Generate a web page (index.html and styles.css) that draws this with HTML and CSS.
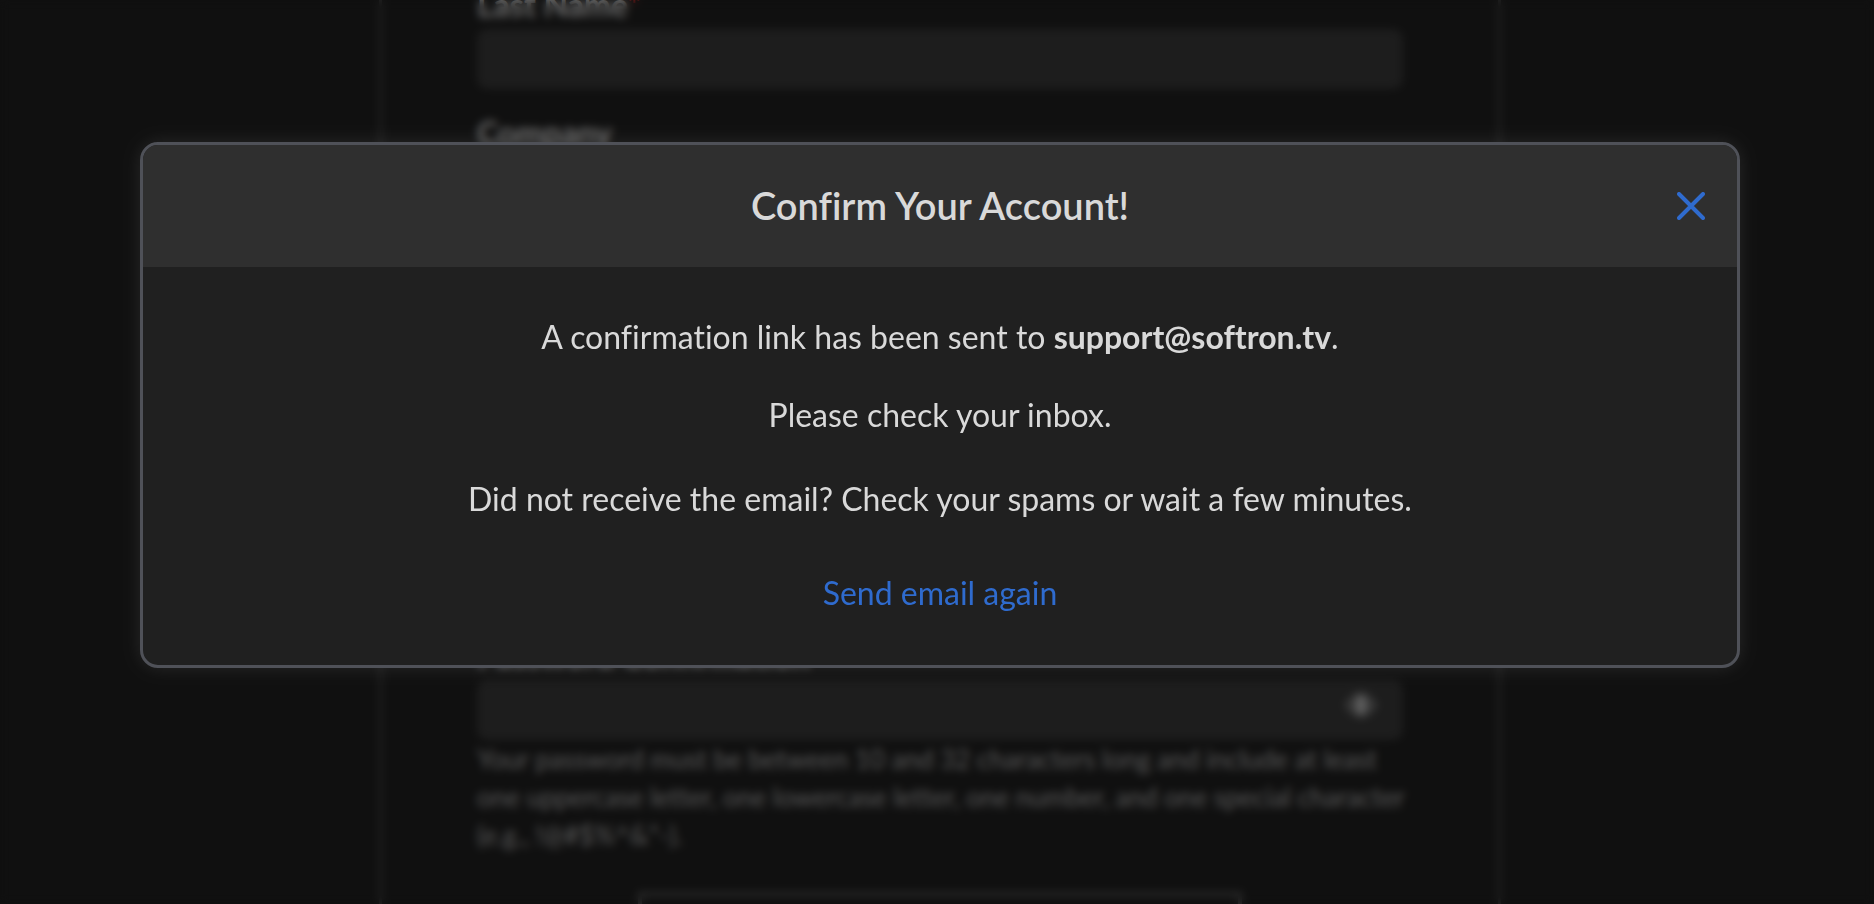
FILE: index.html
```html
<!DOCTYPE html>
<html lang="en">
  <head>
    <meta charset="UTF-8" />
    <meta name="viewport" content="width=device-width, initial-scale=1.0" />
    <title>Confirm Your Account</title>
    <link rel="stylesheet" href="styles.css">
  </head>
  <body>
    <main class="page">
      <form class="signup">
        <div class="field">
          <label for="last-name">Last Name<span class="required">*</span></label>
          <input type="text" id="last-name" />
        </div>
        <div class="field company">
          <label for="company">Company</label>
          <input type="text" id="company" />
        </div>
        <div class="field">
          <label for="password-confirm">Password Confirmation</label>
          <div class="password">
            <input type="password" id="password-confirm" />
            <button type="button" class="reveal" aria-label="Show password">
              <svg width="36" height="28" viewBox="0 0 36 28">
                <path d="M1 14 Q9 1 18 1 Q27 1 35 14 Q27 27 18 27 Q9 27 1 14 Z" fill="#6e6e6e"/>
                <ellipse cx="18" cy="14" rx="5" ry="10" fill="#c4c4c4"/>
              </svg>
            </button>
          </div>
          <p class="hint">
            Your password must be between 10 and 32 characters long and include at least<br>
            one uppercase letter, one lowercase letter, one number, and one special character<br>
            (e.g., !@#$%^&amp;*-).
          </p>
        </div>
        <button type="submit" class="submit" aria-label="Submit"></button>
      </form>
    </main>
    <div class="overlay">
      <div class="modal" role="dialog" aria-modal="true" aria-labelledby="modal-title">
        <header class="modal-header">
          <h1 class="modal-title" id="modal-title">Confirm Your Account!</h1>
          <button type="button" class="close" aria-label="Close">
            <svg width="28" height="28" viewBox="0 0 28 28">
              <path d="M2 2 L26 26 M26 2 L2 26" stroke="#2f6bce" stroke-width="4" stroke-linecap="round" fill="none"/>
            </svg>
          </button>
        </header>
        <div class="modal-body">
          <p>A confirmation link has been sent to <strong>support@softron.tv</strong>.</p>
          <p>Please check your inbox.</p>
          <p class="help">Did not receive the email? Check your spams or wait a few minutes.</p>
          <a href="#" class="resend">Send email again</a>
        </div>
      </div>
    </div>
  </body>
</html>
```

FILE: styles.css
```css
* {
  margin: 0;
  padding: 0;
  box-sizing: border-box;
}

:root {
  --page-bg: #202020;
  --field-bg: #3a3a3a;
  --text: #d9d9d9;
  --blue: #2f6bce;
}

body {
  font-family: Lato, sans-serif;
  font-variant-ligatures: none;
  background-color: var(--page-bg);
  color: var(--text);
  height: 100vh;
  overflow: hidden;
}

button {
  background: none;
  border: none;
  cursor: pointer;
}

/* Sign up form behind the dialog */
.page {
  display: flex;
  justify-content: center;
  height: 100vh;
  padding-left: 6px;
  overflow: hidden;
}

.signup {
  display: flex;
  flex-direction: column;
  justify-content: flex-end;
  flex-shrink: 0;
  width: 100%;
  max-width: 1122px;
  height: 956px;
  padding: 0 95px;
  border: solid #484848;
  border-width: 0 3px;
}

.field label {
  display: block;
  font-size: 32px;
  font-weight: bold;
  line-height: 40px;
  margin-bottom: 4px;
  color: #d0d0d0;
}

.field input {
  display: block;
  width: 100%;
  height: 60px;
  padding: 0 20px;
  font-size: 28px;
  color: var(--text);
  background: var(--field-bg);
  border: none;
  border-radius: 10px;
}

.field .required {
  color: #ff3030;
}

.company {
  margin: 24px 0 419px;
}

.password {
  position: relative;
}

.reveal {
  position: absolute;
  top: 11px;
  right: 24px;
}

.hint {
  font-size: 26px;
  line-height: 38px;
  margin: 0 0 38px;
  color: #b0b0b0;
  white-space: nowrap;
}

.submit {
  flex-shrink: 0;
  align-self: center;
  width: 604px;
  height: 64px;
  border: 4px solid #585858;
}

/* Dialog */
.overlay {
  position: fixed;
  inset: 0;
  display: flex;
  justify-content: center;
  align-items: flex-start;
  padding: 142px 0 0 6px;
  background: rgba(0, 0, 0, 0.5);
  backdrop-filter: blur(4px);
}

.modal {
  width: 100%;
  max-width: 1600px;
  background: #202020;
  border: 3px solid #4f5158;
  border-radius: 18px;
  box-shadow: 0 0 20px rgba(255, 255, 255, 0.1);
  overflow: hidden;
}

.modal-header {
  display: grid;
  grid-template-columns: 28px 1fr 28px;
  align-items: center;
  height: 122px;
  padding: 0 32px;
  background: #2f2f2f;
}

.modal-title {
  grid-column: 2;
  padding-bottom: 2px;
  font-size: 38px;
  font-weight: 600;
  line-height: 44px;
  text-align: center;
}

.close {
  width: 28px;
  height: 28px;
}

.close svg {
  display: block;
}

.modal-body {
  display: flex;
  flex-direction: column;
  align-items: center;
  padding: 50px 32px 52px;
  font-size: 32px;
  line-height: 40px;
  text-align: center;
}

.modal-body p {
  margin-bottom: 38px;
}

.modal-body .help {
  margin: 6px 0 54px;
}

.resend {
  color: var(--blue);
  text-decoration: none;
}
```
